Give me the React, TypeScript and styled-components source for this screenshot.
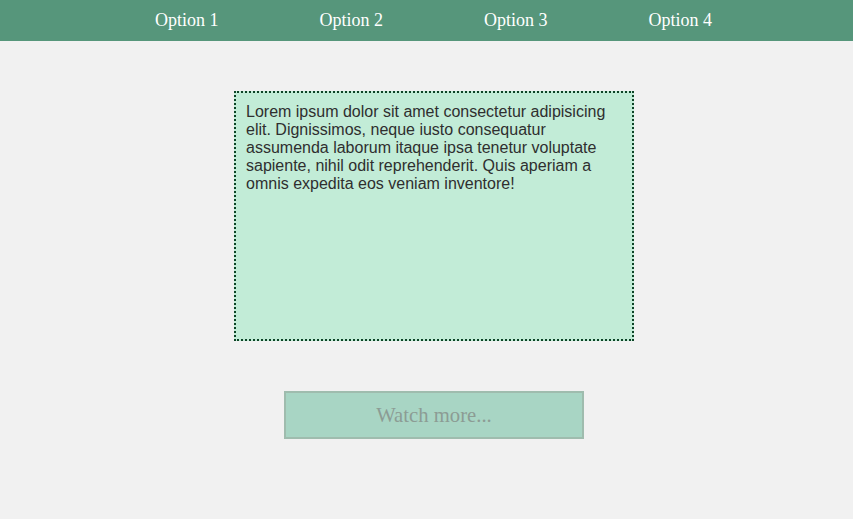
import React from "react"
import styled, { createGlobalStyle } from "styled-components"

const GlobalStyle = createGlobalStyle`
    html, body {
        margin: 0;
        padding: 0;
        background-color: #f1f1f1;
    }
`

const options = ["Option 1", "Option 2", "Option 3", "Option 4"]

export default function App() {
    return (
        <>
            <GlobalStyle />
            <NavBar>
                <NavList>
                    {options.map((option) => (
                        <NavItem key={option}>{option}</NavItem>
                    ))}
                </NavList>
            </NavBar>
            <Main>
                <TextBox>
                    Lorem ipsum dolor sit amet consectetur adipisicing elit.
                    Dignissimos, neque iusto consequatur assumenda laborum itaque
                    ipsa tenetur voluptate sapiente, nihil odit reprehenderit.
                    Quis aperiam a omnis expedita eos veniam inventore!
                </TextBox>
                <WatchButton>Watch more...</WatchButton>
            </Main>
        </>
    )
}

const NavBar = styled.nav`
    height: 41px;
    background-color: #56967b;
    display: flex;
    justify-content: center;
    padding-left: 14px;
`
const NavList = styled.ul`
    display: flex;
    margin: 0;
    padding: 0;
    list-style: none;
`
const NavItem = styled.li`
    width: 164.5px;
    line-height: 41px;
    text-align: center;
    color: #ffffff;
    font-family: "Liberation Serif", "Times New Roman", serif;
    font-size: 18px;
`
const Main = styled.main`
    display: flex;
    flex-direction: column;
    align-items: center;
    padding-left: 15px;
    padding-top: 50px;
`
const TextBox = styled.div`
    box-sizing: border-box;
    width: 400px;
    height: 250px;
    padding: 10px;
    border: 2px dotted #0d4326;
    background-color: #c2ecd7;
    color: #2f2f2f;
    font-family: "Liberation Sans", Arial, sans-serif;
    font-size: 16px;
    line-height: 18px;
`
const WatchButton = styled.button`
    box-sizing: border-box;
    margin-top: 50px;
    width: 300px;
    height: 48px;
    border: 2px solid #9fbcae;
    background-color: #a8d5c4;
    color: #8c9c94;
    font-family: "Liberation Serif", "Times New Roman", serif;
    font-size: 20.7px;
    cursor: pointer;
`
